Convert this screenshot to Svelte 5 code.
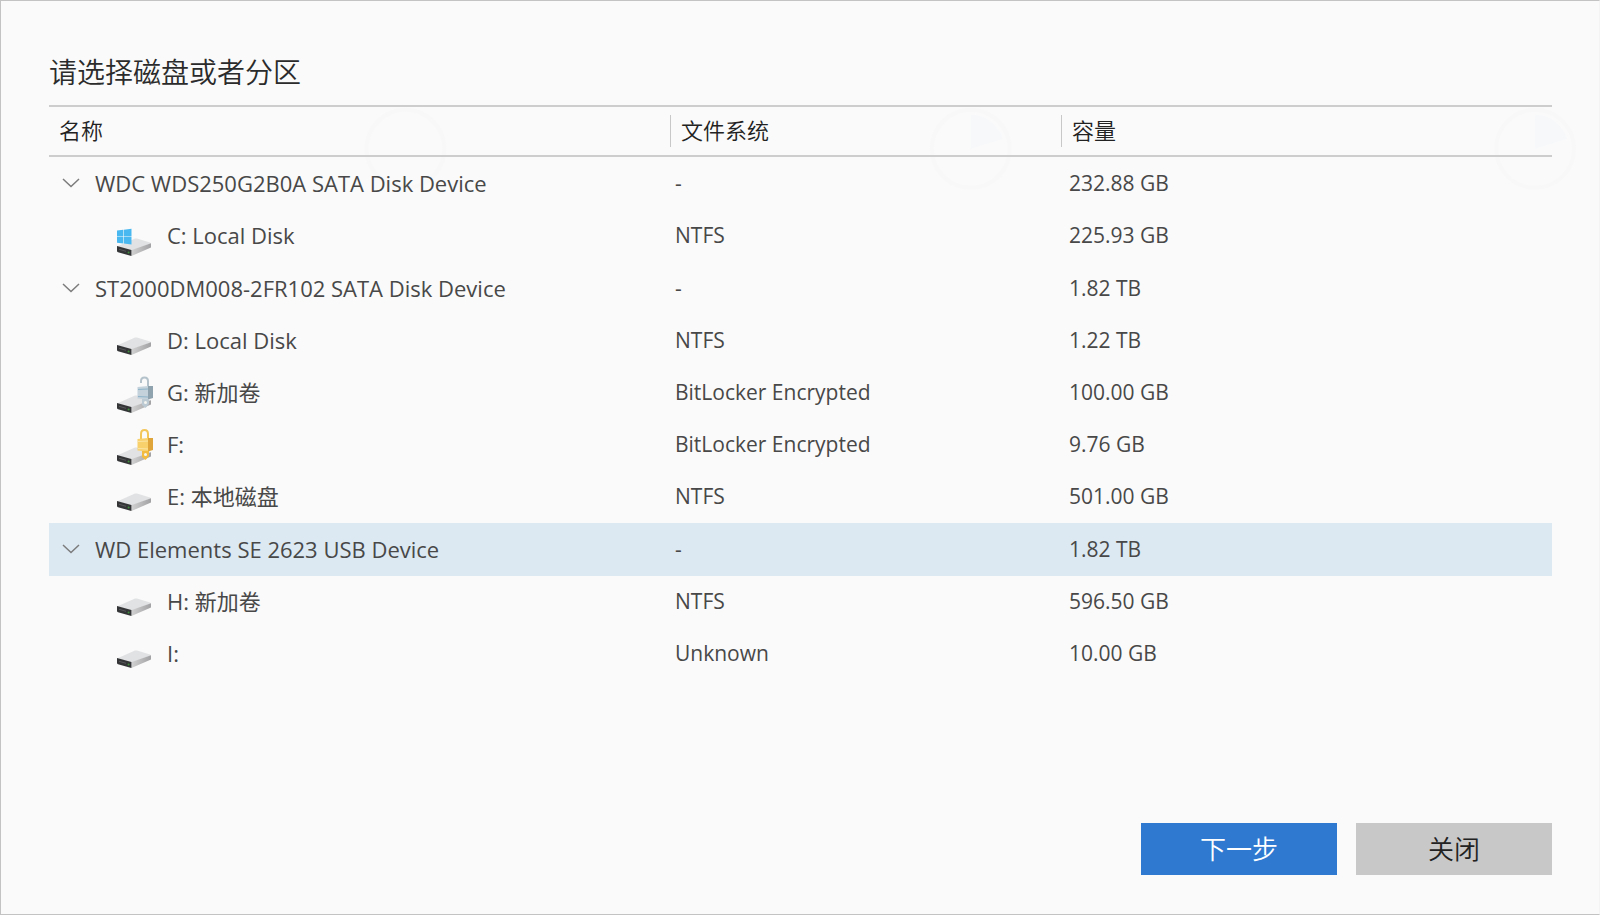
<script lang="ts">
  type Volume = { label: string; fs: string; size: string; kind: 'system' | 'plain' | 'unlocked' | 'locked' }
  type Disk = { name: string; size: string; volumes: Volume[] }

  const disks: Disk[] = [
    {
      name: 'WDC WDS250G2B0A SATA Disk Device',
      size: '232.88 GB',
      volumes: [{ label: 'C: Local Disk', fs: 'NTFS', size: '225.93 GB', kind: 'system' }]
    },
    {
      name: 'ST2000DM008-2FR102 SATA Disk Device',
      size: '1.82 TB',
      volumes: [
        { label: 'D: Local Disk', fs: 'NTFS', size: '1.22 TB', kind: 'plain' },
        { label: 'G: 新加卷', fs: 'BitLocker Encrypted', size: '100.00 GB', kind: 'unlocked' },
        { label: 'F:', fs: 'BitLocker Encrypted', size: '9.76 GB', kind: 'locked' },
        { label: 'E: 本地磁盘', fs: 'NTFS', size: '501.00 GB', kind: 'plain' }
      ]
    },
    {
      name: 'WD Elements SE 2623 USB Device',
      size: '1.82 TB',
      volumes: [
        { label: 'H: 新加卷', fs: 'NTFS', size: '596.50 GB', kind: 'plain' },
        { label: 'I:', fs: 'Unknown', size: '10.00 GB', kind: 'plain' }
      ]
    }
  ]

  let selected = $state('WD Elements SE 2623 USB Device')
  let collapsed: Record<string, boolean> = $state({})
</script>

{#snippet driveIcon(kind: Volume['kind'])}
  <svg class="drive" viewBox="0 -2 38 42" aria-hidden="true">
    <defs>
      <linearGradient id="side" x1="0" x2="1">
        <stop offset="0" stop-color="#d2d2d3" />
        <stop offset="1" stop-color="#a2a2a4" />
      </linearGradient>
    </defs>
    <g transform="translate(0 {kind === 'plain' ? 16 : 22})">
      <path fill="#e1e2e4" d="M1 8.5 19 0.6q1-.4 2 0L34 4.6q1 .4 1 1L16 12.6Z" />
      <path fill="url(#side)" d="M15 12.2 35 5.2v4.3L16 17.8h-1Z" />
      <path fill="#343536" d="M1 8 15.4 12v6L2 14.200q-1-.3-1-1.200Z" />
      <path fill="none" stroke="#56585a" d="M3 11.300 10 13.300" />
      <circle cx="12.600" cy="14.600" r="1" fill="#3f8f3c" />
    </g>
    {#if kind === 'system'}
      <path fill="#4ab8f0" d="M1 14.600 7.200 13.800v6.600H1ZM7.800 13.700 15.500 12.700v7.700H7.800ZM1 21h6.200v6.500L1 26.800ZM7.800 21h7.700v7.500L7.800 27.600Z" />
    {:else if kind !== 'plain'}
      {@const locked = kind === 'locked'}
      <path
        fill="none"
        stroke={locked ? '#f3c65a' : '#b4c2cb'}
        stroke-width="2"
        d={locked ? 'M25 16V9q0-4 3.500-4T32 9v7' : 'M25 10V8q0-3.500 3.500-3.500T32 8v8'}
      />
      <path fill={locked ? '#f8d06c' : '#c3d2db'} d="M21.500 14 32 13v13.500l-10.500-1Z" />
      <path fill={locked ? '#dfa43a' : '#8fa3af'} d="M32 13h5v12l-5 1.500Z" />
      <path stroke={locked ? '#fbe6a6' : '#8fb4ca'} d="M22 16.500 32 16M22 23.500l10 .500" />
      <path fill={locked ? '#f3bb3f' : '#bccbd3'} d="M26 26h7v5l-3.500 4-3.500-3Z" />
      <circle cx="29.500" cy="29.500" r="1.500" fill="#f4f4f0" />
    {/if}
  </svg>
{/snippet}

<main class="dialog">
  <svg class="ghost" viewBox="0 0 1600 300" aria-hidden="true">
    {#each [405, 971, 1536] as cx}
      <circle {cx} cy="148" r="39" />
    {/each}
    <path d="M971 148v-34a34 34 0 0 1 32 24ZM1536 148v-34a34 34 0 0 1 32 24Z" />
  </svg>

  <h1>请选择磁盘或者分区</h1>

  <table>
    <colgroup>
      <col class="col-name" />
      <col class="col-fs" />
      <col />
    </colgroup>
    <thead>
      <tr>
        <th scope="col"><span>名称</span></th>
        <th scope="col"><span>文件系统</span></th>
        <th scope="col"><span>容量</span></th>
      </tr>
    </thead>
    <tbody>
      {#each disks as disk}
        <tr class="disk" class:selected={selected === disk.name} onclick={() => (selected = disk.name)}>
          <td>
            <div class="cell">
              <button
                class="toggle"
                aria-label={disk.name}
                aria-expanded={!collapsed[disk.name]}
                onclick={() => (collapsed[disk.name] = !collapsed[disk.name])}
              >
                <svg viewBox="0 0 18 10" aria-hidden="true"><path d="M1 1l8 7.500L17 1" /></svg>
              </button>
              {disk.name}
            </div>
          </td>
          <td>-</td>
          <td>{disk.size}</td>
        </tr>
        {#if !collapsed[disk.name]}
          {#each disk.volumes as volume}
            <tr class:selected={selected === volume.label} onclick={() => (selected = volume.label)}>
              <td>
                <div class="cell volume">
                  {@render driveIcon(volume.kind)}
                  {volume.label}
                </div>
              </td>
              <td>{volume.fs}</td>
              <td>{volume.size}</td>
            </tr>
          {/each}
        {/if}
      {/each}
    </tbody>
  </table>

  <footer>
    <button class="action primary">下一步</button>
    <button class="action">关闭</button>
  </footer>
</main>

<style>
  :global(body) {
    background: #fafafa;
  }

  .dialog {
    position: relative;
    box-sizing: border-box;
    display: flex;
    flex-direction: column;
    min-height: 100vh;
    padding: 51px 47px 39px 48px;
    border: 1px solid #c3c3c3;
    border-right-color: #f4f4f4;
    background: #fafafa;
    color: #484848;
    font-family: 'Open Sans', 'Noto Sans CJK SC', sans-serif;
    font-size: 21px;
  }

  .dialog > :not(.ghost) {
    position: relative;
  }

  .ghost {
    position: absolute;
    top: 0;
    left: 0;
    width: 100%;
    fill: none;
    stroke: #f8f8f8;
    stroke-width: 4px;
  }

  .ghost path {
    fill: #f6f8fa;
    stroke: none;
  }

  h1 {
    margin: 0 0 13px;
    color: #2b2b2b;
    font-size: 28px;
    font-weight: 350;
    line-height: 40px;
  }

  table {
    width: 100%;
    table-layout: fixed;
    border-collapse: separate;
    border-spacing: 0;
  }

  .col-name {
    width: 621px;
  }

  .col-fs {
    width: 391px;
  }

  th {
    height: 48px;
    padding: 0;
    border-top: 2px solid #cdcdcd;
    border-bottom: 2px solid #cdcdcd;
    color: #222;
    font-size: 22px;
    font-weight: 350;
    text-align: left;
  }

  th span {
    display: block;
    padding: 0 0 2px 10px;
    line-height: 30px;
  }

  th + th span {
    border-left: 1px solid #c8c8c8;
  }

  td {
    height: 50px;
    padding: 0 0 2px 5px;
    line-height: 32px;
    white-space: nowrap;
  }

  td:first-child {
    padding-left: 13px;
    font-size: 22px;
  }

  td:last-child {
    padding-left: 8px;
  }

  .disk td {
    height: 51px;
  }

  .selected td {
    background: #dce9f3;
  }

  .cell {
    display: flex;
    align-items: center;
    gap: 15px;
  }

  .volume {
    padding-left: 54px;
    gap: 13px;
  }

  .toggle {
    display: flex;
    padding: 0;
    border: 0;
    background: none;
    cursor: pointer;
  }

  .toggle svg {
    width: 18px;
    height: 10px;
    fill: none;
    stroke: #7c7c7c;
    stroke-width: 1.500px;
  }

  .toggle[aria-expanded='false'] svg {
    transform: rotate(-90deg);
  }

  .drive {
    width: 38px;
    height: 42px;
  }

  footer {
    display: flex;
    justify-content: flex-end;
    gap: 19px;
    margin-top: auto;
  }

  .action {
    width: 196px;
    height: 52px;
    padding: 0 0 2px;
    border: 0;
    background: #c8c8c8;
    color: #222;
    font-family: inherit;
    font-size: 26px;
    font-weight: 350;
    cursor: pointer;
  }

  .primary {
    background: #2f79d1;
    color: #fff;
  }
</style>
